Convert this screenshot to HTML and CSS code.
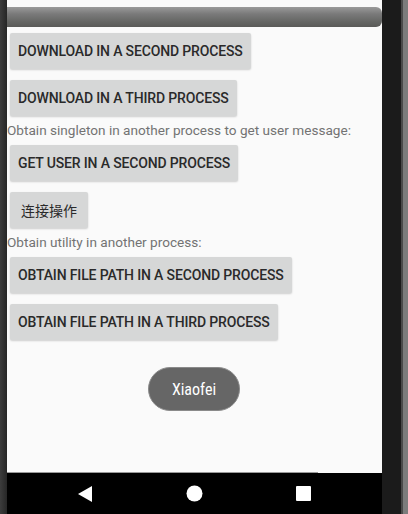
FILE: index.html
```html
<!DOCTYPE html>
<html>
<head>
<meta charset="utf-8">
<link rel="stylesheet" href="styles.css">
</head>
<body>
<div class="device">
  <div class="frame-left"></div>
  <div class="screen">
    <div class="content">
      <div class="bar"></div>
      <button class="btn">DOWNLOAD IN A SECOND PROCESS</button>
      <button class="btn">DOWNLOAD IN A THIRD PROCESS</button>
      <p class="label">Obtain singleton in another process to get user message:</p>
      <button class="btn">GET USER IN A SECOND PROCESS</button>
      <button class="btn btn-cjk">连接操作</button>
      <p class="label">Obtain utility in another process:</p>
      <button class="btn">OBTAIN FILE PATH IN A SECOND PROCESS</button>
      <button class="btn">OBTAIN FILE PATH IN A THIRD PROCESS</button>
      <div class="toast">Xiaofei</div>
      <div class="edge-line"></div>
    </div>
    <div class="navbar">
      <svg class="nav-icon" width="16" height="16" viewBox="0 0 16 16"><polygon points="15,0 15,16 1,8" fill="#fff"/></svg>
      <svg class="nav-icon" width="17" height="17" viewBox="0 0 17 17"><circle cx="8.5" cy="8.5" r="8" fill="#fff"/></svg>
      <svg class="nav-icon" width="15" height="15" viewBox="0 0 15 15"><rect x="0" y="0" width="15" height="15" rx="1" fill="#fff"/></svg>
    </div>
  </div>
  <div class="frame-right">
    <div class="fr-dark"></div>
    <div class="fr-mid"></div>
    <div class="fr-light"></div>
  </div>
</div>
</body>
</html>
```

FILE: styles.css
```css
* { box-sizing: border-box; }
html, body { margin: 0; padding: 0; }
body {
  width: 408px;
  height: 514px;
  overflow: hidden;
  font-family: Roboto, "Noto Sans CJK SC", sans-serif;
}
.device {
  display: flex;
  width: 408px;
  height: 514px;
}
.frame-left {
  width: 7px;
  background: linear-gradient(to right, #3c3c3c, #262626);
}
.screen {
  width: 375px;
  display: flex;
  flex-direction: column;
  background: #fafafa;
}
.content {
  position: relative;
  flex: 1;
  display: flex;
  flex-direction: column;
  align-items: flex-start;
  padding-top: 7px;
}
.bar {
  align-self: stretch;
  height: 20px;
  border-radius: 0 6px 6px 0;
  background: linear-gradient(to bottom, #9a9a9a 0%, #7a7a7a 35%, #646563 75%, #5a5a58 100%);
}
.btn {
  margin: 6px 3px 5px 3px;
  height: 36px;
  min-width: 78px;
  padding: 0 8px;
  border: none;
  border-radius: 2px;
  background: #d6d7d7;
  color: #2a2a2a;
  font-family: Roboto, "Noto Sans CJK SC", sans-serif;
  font-weight: 500;
  font-size: 14px;
  letter-spacing: -0.15px;
  box-shadow: 0 1px 2px rgba(0,0,0,0.18);
}
.btn-cjk {
  font-weight: 400;
  letter-spacing: 0;
  font-family: "Noto Sans CJK SC", sans-serif;
}
.label {
  margin: 0;
  height: 18px;
  line-height: 18px;
  font-size: 13.6px;
  color: #737373;
}
.toast {
  position: absolute;
  left: 141px;
  top: 367px;
  width: 92px;
  height: 44px;
  border-radius: 22px;
  background: #666;
  border: 1px solid #8a8a8a;
  color: #fff;
  font-size: 16px;
  display: flex;
  align-items: center;
  justify-content: center;
  font-stretch: condensed;
}
.edge-line {
  position: absolute;
  left: 0;
  bottom: 0;
  width: 311px;
  height: 1px;
  background: #9a9a9a;
}
.navbar {
  height: 41px;
  background: #000;
  display: flex;
  align-items: center;
}
.nav-icon:nth-child(1) { margin-left: 70px; }
.nav-icon:nth-child(2) { margin-left: 93px; }
.nav-icon:nth-child(3) { margin-left: 93px; }
.frame-right {
  flex: 1;
  display: flex;
}
.fr-dark { width: 19px; background: #1b1b1b; }
.fr-mid { width: 2px; background: #4a4a4a; }
.fr-light { flex: 1; background: #7c7c7c; }
```
